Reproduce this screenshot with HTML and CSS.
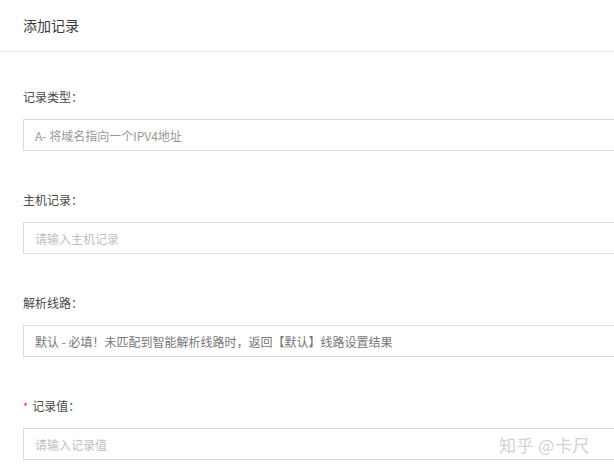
FILE: index.html
```html
<!DOCTYPE html>
<html lang="zh-CN">
<head>
<meta charset="utf-8">
<title>添加记录</title>
<link rel="stylesheet" href="styles.css">
</head>
<body>
<div class="panel">
  <div class="header">添加记录</div>
  <div class="form">
    <div class="item">
      <div class="label">记录类型：</div>
      <div class="field field-value-light">A- 将域名指向一个IPV4地址</div>
    </div>
    <div class="item">
      <div class="label">主机记录：</div>
      <input class="field" type="text" placeholder="请输入主机记录">
    </div>
    <div class="item">
      <div class="label">解析线路：</div>
      <div class="field field-value">默认 - 必填！未匹配到智能解析线路时，返回【默认】线路设置结果</div>
    </div>
    <div class="item">
      <div class="label"><span class="req">*</span>记录值：</div>
      <input class="field" type="text" placeholder="请输入记录值">
    </div>
  </div>
  <div class="watermark">知乎 @卡尺</div>
</div>
</body>
</html>
```

FILE: styles.css
```css
html, body {
  margin: 0;
  padding: 0;
  overflow: hidden;
  background: #fff;
}
body {
  font-family: "Noto Sans CJK SC", "Microsoft YaHei", sans-serif;
  color: #444;
}
.panel {
  position: relative;
  width: 614px;
  height: 474px;
  overflow: hidden;
}
.header {
  height: 52px;
  box-sizing: border-box;
  padding: 0 0 2px 23px;
  display: flex;
  align-items: center;
  font-size: 14px;
  color: #3a3a3a;
  border-bottom: 1px solid #ececec;
}
.form {
  padding: 35px 0 0 23px;
  overflow: hidden;
}
.item {
  margin-bottom: 39px;
}
.label {
  font-size: 12px;
  line-height: 20px;
  height: 20px;
  margin-bottom: 12px;
  color: #4a4a4a;
}
.req {
  color: #e4393c;
  margin-right: 4px;
  font-size: 11px;
}
.field {
  display: flex;
  align-items: center;
  width: 620px;
  height: 32px;
  box-sizing: border-box;
  border: 1px solid #dcdcdc;
  padding: 0 11px;
  margin: 0;
  font-family: inherit;
  font-size: 12px;
  color: #777;
  background: #fff;
  outline: none;
}
.field::placeholder {
  color: #c0c0c0;
}
.field-value-light {
  color: #999;
}
.field-value {
  color: #777;
}
.watermark {
  position: absolute;
  left: 499px;
  top: 434px;
  font-size: 17px;
  line-height: 22px;
  color: #d2d2d2;
  letter-spacing: 0.5px;
}
```
